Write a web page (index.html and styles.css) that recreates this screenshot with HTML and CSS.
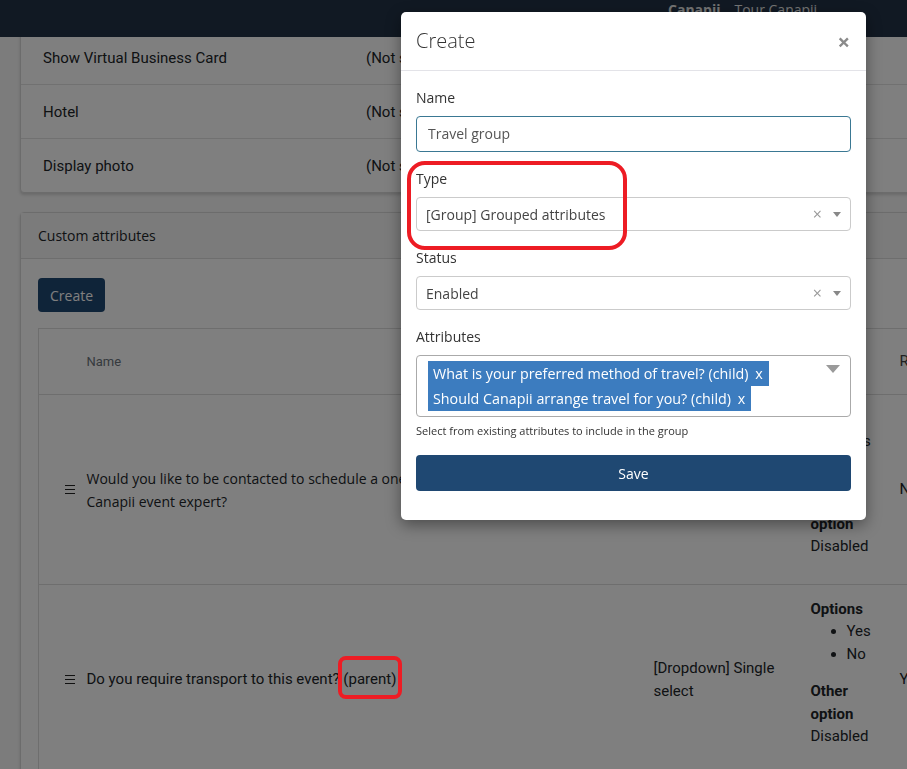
FILE: index.html
```html
<!DOCTYPE html>
<html lang="en">
<head>
    <meta charset="UTF-8">
    <meta name="viewport" content="width=device-width, initial-scale=1.0">
    <title>Custom attributes</title>
    <link rel="stylesheet" href="styles.css">
</head>
<body>
    <nav class="topbar">
        <b class="brand">Canapii</b>
        <span class="tour">Tour Canapii</span>
    </nav>

    <main class="page">
        <section class="card">
            <table class="settings">
                <tr><td>Show Virtual Business Card</td><td>(Not set)</td></tr>
                <tr><td>Hotel</td><td>(Not set)</td></tr>
                <tr><td>Display photo</td><td>(Not set)</td></tr>
            </table>
        </section>

        <section class="card">
            <div class="card-header">Custom attributes</div>
            <div class="card-body">
                <button class="btn btn-primary">Create</button>

                <table class="attr-table">
                    <colgroup>
                        <col class="c-handle">
                        <col class="c-name">
                        <col class="c-type">
                        <col class="c-opts">
                        <col class="c-req">
                        <col class="c-rest">
                    </colgroup>
                    <thead>
                        <tr>
                            <th></th>
                            <th>Name</th>
                            <th>Type</th>
                            <th>Details</th>
                            <th class="dark">Required</th>
                            <th></th>
                        </tr>
                    </thead>
                    <tbody>
                        <tr>
                            <td class="handle"><svg width="10" height="9" viewBox="0 0 10 9"><path d="M0 0.5H10M0 4.5H10M0 8.5H10" stroke="#222" stroke-width="1.1"/></svg></td>
                            <td class="q-long">Would you like to be contacted to schedule a one-on-one meeting with a<br>Canapii event expert?</td>
                            <td>[Radio] Single select</td>
                            <td class="opts">
                                <strong>Options</strong>
                                <ul><li>Yes</li><li>No</li></ul>
                                <strong>Other option</strong>
                                <p>Disabled</p>
                            </td>
                            <td>No</td>
                            <td></td>
                        </tr>
                        <tr>
                            <td class="handle"><svg width="10" height="9" viewBox="0 0 10 9"><path d="M0 0.5H10M0 4.5H10M0 8.5H10" stroke="#222" stroke-width="1.1"/></svg></td>
                            <td>Do you require transport to this event? (parent)</td>
                            <td>[Dropdown] Single select</td>
                            <td class="opts">
                                <strong>Options</strong>
                                <ul><li>Yes</li><li>No</li></ul>
                                <strong>Other option</strong>
                                <p>Disabled</p>
                            </td>
                            <td>Yes</td>
                            <td></td>
                        </tr>
                    </tbody>
                </table>
            </div>
        </section>
    </main>

    <div class="backdrop"></div>

    <div class="modal">
        <div class="modal-dialog">
            <div class="modal-content">
                <div class="modal-header">
                    <h4 class="modal-title">Create</h4>
                    <span class="close">&times;</span>
                </div>
                <div class="modal-body">
                    <div class="form-group">
                        <label>Name</label>
                        <div class="form-control focused">Travel group</div>
                    </div>
                    <div class="form-group">
                        <label>Type</label>
                        <div class="select">
                            <span>[Group] Grouped attributes</span>
                            <span class="clear">&times;</span>
                            <span class="caret"></span>
                        </div>
                    </div>
                    <div class="form-group">
                        <label>Status</label>
                        <div class="select">
                            <span>Enabled</span>
                            <span class="clear">&times;</span>
                            <span class="caret"></span>
                        </div>
                    </div>
                    <div class="form-group last">
                        <label>Attributes</label>
                        <div class="multi">
                            <div class="tags">
                                <span class="tag">What is your preferred method of travel? (child) <i>x</i></span>
                                <span class="tag">Should Canapii arrange travel for you? (child) <i>x</i></span>
                            </div>
                            <span class="caret big"></span>
                        </div>
                        <div class="help">Select from existing attributes to include in the group</div>
                    </div>
                    <button class="btn btn-save">Save</button>
                </div>
            </div>
        </div>
    </div>

    <div class="mark mark-type"></div>
    <div class="mark mark-parent"></div>
</body>
</html>
```

FILE: styles.css
```css
html, body {
    overflow: hidden;
}

body {
    margin: 0;
    font-family: "Open Sans", sans-serif;
    font-size: 14px;
    color: #212529;
    background-color: #f8f8f8;
}

.topbar {
    position: fixed;
    top: 0;
    left: 0;
    right: 0;
    height: 37px;
    z-index: 30;
    display: flex;
    align-items: flex-start;
    padding-left: 668px;
    background-color: #223246;
    color: #e8e8e8;
    line-height: 20px;
}

.brand {
    margin-right: 14px;
}

.page {
    width: 960px;
    padding: 30px 0 0 20px;
}

.card {
    background: #fff;
    border: 1px solid #d9d9d9;
    border-radius: 4px;
    box-shadow: 0 2px 3px rgba(0, 0, 0, 0.15);
    margin-bottom: 19px;
}

.settings {
    width: 100%;
    border-collapse: collapse;
    font-family: Roboto, sans-serif;
    font-size: 15px;
}

.settings td {
    height: 53px;
    padding: 0 0 0 22px;
    border-top: 1px solid #e2e2e2;
}

.settings tr:first-child td {
    border-top: none;
}

.settings td:first-child {
    width: 301px;
}

.card-header {
    height: 45px;
    line-height: 46px;
    padding: 0 17px;
    background-color: #f6f6f6;
    border-bottom: 1px solid #dcdcdc;
}

.card-body {
    padding: 19px 0 40px 17px;
}

.btn {
    display: block;
    border: none;
    border-radius: 4px;
    font-family: "Open Sans", sans-serif;
    font-size: 14px;
    cursor: pointer;
}

.btn-primary {
    height: 34px;
    padding: 0 12px;
    color: #fff;
    background-color: #1f4872;
}

.attr-table {
    margin-top: 16px;
    width: 1000px;
    table-layout: fixed;
    border-collapse: collapse;
    border: 1px solid #dcdcdc;
    font-family: Roboto, sans-serif;
    font-size: 15px;
    line-height: 1.5;
}

.c-handle { width: 36px; }
.c-name { width: 567px; }
.c-type { width: 157px; }
.c-opts { width: 89px; }
.c-req { width: 100px; }

.attr-table th {
    height: 65px;
    padding: 0 12px;
    text-align: left;
    font-weight: normal;
    font-size: 13px;
    color: #6c757d;
    border-bottom: 1px solid #dcdcdc;
}

.attr-table th.dark {
    color: #444;
    font-size: 15px;
}

.attr-table tbody tr {
    height: 190px;
}

.attr-table td {
    padding: 11px 12px;
    vertical-align: middle;
    border-bottom: 1px solid #dcdcdc;
}

.attr-table td.handle {
    padding: 0 0 0 26px;
}

.handle svg {
    display: block;
}

.attr-table td.q-long {
    font-family: "Open Sans", sans-serif;
    font-size: 14px;
    line-height: 23px;
}

.opts strong {
    display: block;
}

.opts ul {
    margin: 0 0 15px;
    padding-left: 36px;
}

.opts p {
    margin: 0 0 14px;
}

.backdrop {
    position: fixed;
    top: 0;
    left: 0;
    right: 0;
    bottom: 0;
    z-index: 40;
    background: rgba(0, 0, 0, 0.5);
}

.modal {
    position: fixed;
    top: 0;
    left: 0;
    right: 0;
    bottom: 0;
    z-index: 50;
}

.modal-dialog {
    width: 465px;
    margin: 12px 0 0 401px;
}

.modal-content {
    background: #fff;
    border-radius: 5px;
    box-shadow: 0 5px 15px rgba(0, 0, 0, 0.4);
}

.modal-header {
    display: flex;
    align-items: center;
    justify-content: space-between;
    padding: 15px 15px 15px;
    border-bottom: 1px solid #e3e3e8;
}

.modal-title {
    margin: 0;
    font-size: 20px;
    font-weight: 300;
    line-height: 28px;
    color: #333;
}

.close {
    font-size: 22px;
    line-height: 1;
    font-weight: 700;
    color: #8a8a8a;
    margin-right: 1px;
}

.modal-body {
    padding: 17px 15px 29px;
}

.form-group {
    margin-bottom: 17px;
}

.form-group.last {
    margin-bottom: 16px;
}

.form-group label {
    display: block;
    margin-bottom: 8px;
    line-height: 20px;
    color: #333;
}

.form-control {
    box-sizing: border-box;
    height: 36px;
    line-height: 34px;
    padding: 0 11px;
    border: 1px solid #ccc;
    border-radius: 4px;
    color: #555;
}

.form-control.focused {
    border-color: #3a7893;
}

.select {
    box-sizing: border-box;
    display: flex;
    align-items: center;
    height: 34px;
    padding: 0 9px 0 9px;
    border: 1px solid #cbcbcb;
    border-radius: 4px;
    color: #444;
}

.select .clear {
    margin-left: auto;
    font-size: 16px;
    color: #999;
}

.caret {
    width: 0;
    height: 0;
    margin-left: 11px;
    border-left: 4.5px solid transparent;
    border-right: 4.5px solid transparent;
    border-top: 5px solid #888;
}

.multi {
    box-sizing: border-box;
    display: flex;
    padding: 5px 10px 5px 11px;
    border: 1px solid #aaa;
    border-radius: 4px;
}

.tags {
    display: flex;
    flex-direction: column;
    align-items: flex-start;
}

.tag {
    padding: 0 6px 0 5px;
    line-height: 25px;
    font-size: 14.3px;
    color: #fff;
    background-color: #3c7cbf;
}

.tag i {
    font-style: normal;
    margin-left: 3px;
}

.caret.big {
    margin-left: auto;
    margin-top: 4px;
    border-left-width: 7px;
    border-right-width: 7px;
    border-top: 8px solid #9a9a9a;
}

.help {
    margin-top: 6px;
    font-size: 11px;
    line-height: 16px;
    color: #333;
}

.btn-save {
    width: 100%;
    height: 36px;
    color: #fff;
    background-color: #1f4872;
}

.mark {
    position: absolute;
    z-index: 100;
    box-sizing: border-box;
    border: 4px solid #ed1c24;
}

.mark-type {
    left: 407px;
    top: 161px;
    width: 220px;
    height: 89px;
    border-radius: 18px;
}

.mark-parent {
    left: 338px;
    top: 656px;
    width: 64px;
    height: 43px;
    border-radius: 8px;
}
```
